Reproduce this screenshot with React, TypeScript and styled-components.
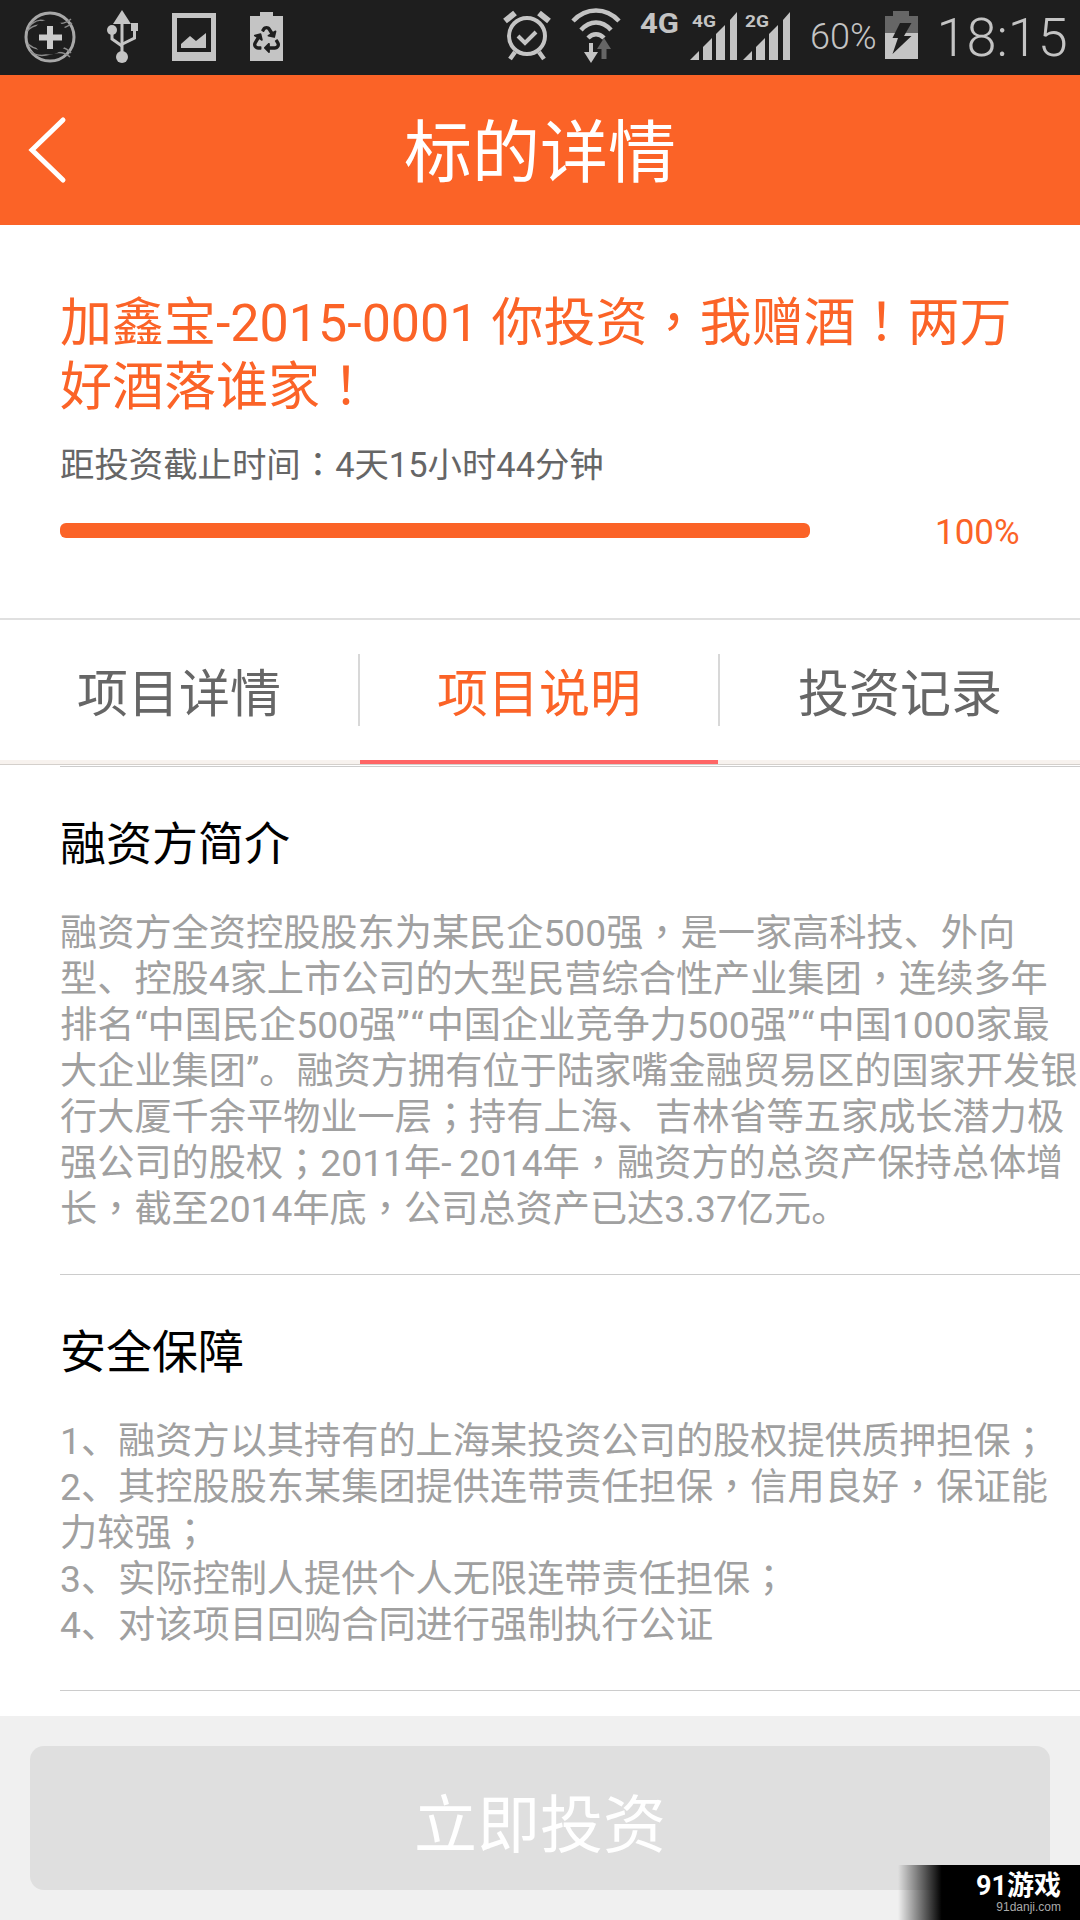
import React from "react";
import styled, { createGlobalStyle } from "styled-components";
import { FaRecycle } from "react-icons/fa";

const ORANGE = "#fb6327";
const ICON = "#c4c4c4";
const BAR = "#1e1e1e";

const GlobalStyle = createGlobalStyle`
  html, body {
    margin: 0;
    padding: 0;
    background: #fff;
  }
  body {
    font-family: Roboto, "Noto Sans CJK SC", sans-serif;
  }
`;

const Page = styled.div`
  position: relative;
  width: 1080px;
  height: 1920px;
  overflow: hidden;
  display: flex;
  flex-direction: column;
  background: #fff;
`;

const StatusBar = styled.div`
  height: 75px;
  flex: none;
  display: flex;
  background: ${BAR};
  color: ${ICON};
`;

const StatusIcon = styled.svg<{ $left: number }>`
  display: block;
  flex: none;
  height: 75px;
  margin-left: ${(p) => p.$left}px;
`;

const StatusText = styled.span<{ $left: number; $size: number }>`
  flex: none;
  margin-left: ${(p) => p.$left}px;
  font-size: ${(p) => p.$size}px;
  font-weight: 300;
  line-height: 75px;
  white-space: nowrap;
`;

const Header = styled.header`
  position: relative;
  height: 150px;
  flex: none;
  box-sizing: border-box;
  padding-top: 7px;
  display: flex;
  align-items: center;
  justify-content: center;
  background: ${ORANGE};
`;

const BackIcon = styled.svg`
  position: absolute;
  left: 28px;
  top: 41px;
`;

const HeaderTitle = styled.h1`
  margin: 0;
  font-size: 68px;
  font-weight: 400;
  line-height: 100px;
  color: #fff;
`;

const Summary = styled.section`
  height: 395px;
  flex: none;
  box-sizing: border-box;
  padding: 67px 0 0 60px;
  border-bottom: 2px solid #e0e0e0;
`;

const ProjectTitle = styled.h2`
  margin: 0;
  font-size: 52px;
  font-weight: 400;
  line-height: 64px;
  color: ${ORANGE};
  white-space: nowrap;
`;

const Deadline = styled.p`
  margin: 22px 0 0;
  font-size: 34.4px;
  line-height: 46px;
  color: #666;
  white-space: nowrap;
`;

const ProgressRow = styled.div`
  margin-top: 22px;
  height: 40px;
  display: flex;
  align-items: center;
`;

const ProgressBar = styled.div`
  width: 750px;
  height: 15px;
  border-radius: 6px;
  background: ${ORANGE};
`;

const ProgressValue = styled.span`
  margin: 4px 0 0 125px;
  font-size: 35px;
  color: ${ORANGE};
`;

const TabRow = styled.nav`
  height: 144px;
  flex: none;
  box-sizing: border-box;
  display: flex;
  margin-bottom: 2px;
  border-bottom: 4px solid #f7f2ee;
  box-shadow: 0 1px 0 #d4d0cc;
`;

const Tab = styled.div<{ $active?: boolean; $width: number }>`
  width: ${(p) => p.$width}px;
  flex: none;
  display: flex;
  align-items: center;
  justify-content: center;
  font-size: 51px;
  color: ${(p) => (p.$active ? ORANGE : "#666")};
  ${(p) => p.$active && "height: 144px; box-sizing: border-box; border-bottom: 4px solid #f66;"}
`;

const TabDivider = styled.div`
  width: 2px;
  height: 72px;
  flex: none;
  align-self: center;
  background: #d8d8d8;
`;

const Section = styled.section`
  margin-left: 60px;
  padding: 47px 0 42px;
  border-top: 1px solid #ccc;
`;

const SectionTitle = styled.h3`
  margin: 0;
  font-size: 46px;
  font-weight: 400;
  line-height: 60px;
  color: #000;
`;

const SectionBody = styled.div`
  margin-top: 36px;
  font-size: 37.2px;
  line-height: 46px;
  color: #a0a0a0;
  white-space: nowrap;
`;

const EndRule = styled.div`
  margin-left: 60px;
  height: 1px;
  flex: none;
  background: #ccc;
`;

const Footer = styled.footer`
  flex: 1;
  margin-top: 25px;
  padding: 30px 30px 0;
  background: #f0f0f0;
`;

const InvestButton = styled.div`
  height: 144px;
  box-sizing: border-box;
  padding-top: 3px;
  border-radius: 14px;
  display: flex;
  align-items: center;
  justify-content: center;
  background: #dfdfdf;
  font-size: 63px;
  color: #fff;
`;

const Mid = styled.span`
  font-family: Roboto, "Noto Sans CJK TC", sans-serif;
`;

const QuotePair = styled.span`
  letter-spacing: 3px;
`;

const Watermark = styled.div`
  position: absolute;
  right: 0;
  bottom: 0;
  width: 182px;
  height: 55px;
  box-sizing: border-box;
  padding: 7px 19px 0 0;
  display: flex;
  flex-direction: column;
  align-items: flex-end;
  background: linear-gradient(to right, rgba(0, 0, 0, 0), #000 24%);
  color: #fff;
`;

const WatermarkLogo = styled.span`
  font-size: 27px;
  font-weight: 700;
  line-height: 28px;
`;

const WatermarkUrl = styled.span`
  font-family: "Liberation Sans", sans-serif;
  font-size: 12px;
  line-height: 14px;
  color: #aaa;
`;

// centred full-width punctuation, as the phone's fallback font draws it
function punct(text: string) {
  return text.split(/([，！；：]|”“)/).map((part, i) => {
    if (i % 2 === 0) return part;
    return part === "”“" ? <QuotePair key={i}>{part}</QuotePair> : <Mid key={i}>{part}</Mid>;
  });
}

const introLines = [
  "融资方全资控股股东为某民企500强，是一家高科技、外向",
  "型、控股4家上市公司的大型民营综合性产业集团，连续多年",
  "排名“中国民企500强”“中国企业竞争力500强”“中国1000家最",
  "大企业集团”。融资方拥有位于陆家嘴金融贸易区的国家开发银",
  "行大厦千余平物业一层；持有上海、吉林省等五家成长潜力极",
  "强公司的股权；2011年-\u20092014年，融资方的总资产保持总体增",
  "长，截至2014年底，公司总资产已达3.37亿元。",
];

const safetyLines = [
  "1、融资方以其持有的上海某投资公司的股权提供质押担保；",
  "2、其控股股东某集团提供连带责任担保，信用良好，保证能",
  "力较强；",
  "3、实际控制人提供个人无限连带责任担保；",
  "4、对该项目回购合同进行强制执行公证",
];

function Signal({ left, label }: { left: number; label: string }) {
  return (
    <StatusIcon $left={left} width="48" viewBox="0 0 48 75" fill={ICON}>
      <polygon points="0,60 9,51 9,60" />
      <polygon points="13,60 13,47 22,38 22,60" />
      <polygon points="26,60 26,34 35,25 35,60" />
      <polygon points="40,60 40,20 47,12 47,60" />
      <text x="2" y="27" fontFamily="Roboto, sans-serif" fontSize="16" fontWeight="700" textLength="24" lengthAdjust="spacingAndGlyphs">
        {label}
      </text>
    </StatusIcon>
  );
}

function StatusIcons() {
  return (
    <StatusBar>
      {/* add-circle notification */}
      <StatusIcon $left={24} width="52" viewBox="0 0 52 75" fill="none">
        <circle cx="26" cy="37" r="24" stroke="#a8a8a8" strokeWidth="3" />
        <path d="M5 27c7-9 14-7 21-5s14 3 21 -3M3 31c8-8 15-6 23-4s14 3 22-4" stroke="#8c8c8c" strokeWidth="1.5" />
        <path d="M4 44c8 7 15 5 22 4s14-3 21 5M6 51c7 6 14 5 20 3s14-3 20 3" stroke="#8c8c8c" strokeWidth="1.5" />
        <circle cx="26" cy="37" r="17.5" fill={BAR} />
        <path d="M26 26v23M15 37.5h23" stroke="#ccc" strokeWidth="6" />
      </StatusIcon>
      {/* usb */}
      <StatusIcon $left={30} width="32" viewBox="0 0 32 75" fill={ICON} stroke="none">
        <polygon points="16,10 7,24 25,24" />
        <rect x="14.5" y="23" width="3" height="30" />
        <circle cx="16" cy="57" r="6" />
        <circle cx="6" cy="30" r="5" />
        <rect x="25" y="23" width="7" height="8" />
        <path d="M6 33v6l10 7M28.5 30v8l-12 6" fill="none" stroke={ICON} strokeWidth="3" />
      </StatusIcon>
      {/* picture */}
      <StatusIcon $left={34} width="44" viewBox="0 0 44 75">
        <rect x="0" y="13" width="44" height="48" fill={ICON} />
        <rect x="5" y="18" width="34" height="34" fill={BAR} />
        <polygon points="9,48 9,44 18,36 24,41 34,33 34,48" fill={ICON} />
      </StatusIcon>
      {/* battery saver */}
      <StatusIcon $left={34} width="33" viewBox="0 0 33 75">
        <rect x="0" y="16" width="33" height="45" fill={ICON} />
        <rect x="10" y="12" width="13" height="6" fill={ICON} />
        <FaRecycle x="3" y="26" size="27" color={BAR} />
      </StatusIcon>
      {/* alarm */}
      <StatusIcon $left={220} width="48" viewBox="0 0 48 75" fill="none" stroke={ICON}>
        <circle cx="24" cy="36" r="18" strokeWidth="4" />
        <path d="M2 21L12 13M46 21L36 13" strokeWidth="6" />
        <path d="M12 52l-5 7M36 52l5 7" strokeWidth="4.5" />
        <path d="M15 36l7 7 11-11" strokeWidth="4" />
      </StatusIcon>
      {/* wifi with data arrows */}
      <StatusIcon $left={20} width="50" viewBox="0 0 50 75" fill="none" stroke={ICON} strokeWidth="4.5">
        <path d="M2 21C15 7 35 7 48 21" />
        <path d="M10 30C19 20 31 20 40 30" />
        <path d="M17 38C22 33 28 33 33 38" />
        <polygon points="33,38 26,49 40,49" fill="#666" stroke="none" />
        <rect x="30.5" y="48" width="5" height="11" fill="#666" stroke="none" />
        <rect x="18" y="43" width="4" height="11" fill={ICON} stroke="none" />
        <polygon points="20,63 13,52 27,52" fill={ICON} stroke="none" />
      </StatusIcon>
      {/* network type */}
      <StatusIcon $left={19} width="40" viewBox="0 0 40 75" fill={ICON}>
        <text x="0" y="33" fontFamily="Roboto, sans-serif" fontSize="28" fontWeight="700" textLength="39" lengthAdjust="spacingAndGlyphs">
          4G
        </text>
      </StatusIcon>
      <Signal left={10} label="4G" />
      <Signal left={5} label="2G" />
      <StatusText $left={19} $size={36}>60%</StatusText>
      {/* charging battery */}
      <StatusIcon $left={8} width="33" viewBox="0 0 33 75">
        <rect x="8" y="11" width="16" height="6" fill="#666" />
        <rect x="0" y="16" width="33" height="17" fill="#666" />
        <rect x="0" y="33" width="33" height="26" fill={ICON} />
        <polygon points="15,23 26.500,23 19,36 26.500,36 7.500,54 13,38 7.500,38" fill={BAR} />
      </StatusIcon>
      <StatusText $left={19} $size={54}>18:15</StatusText>
    </StatusBar>
  );
}

export default function App() {
  return (
    <Page>
      <GlobalStyle />
      <StatusIcons />
      <Header>
        <BackIcon width="44" height="68" viewBox="0 0 44 68" fill="none" stroke="#fff" strokeWidth="5" strokeLinecap="round">
          <path d="M35 4L4 34l31 30" />
        </BackIcon>
        <HeaderTitle>标的详情</HeaderTitle>
      </Header>
      <Summary>
        <ProjectTitle>
          {punct("加鑫宝-2015-0001 你投资，我赠酒！两万")}
          <br />
          {punct("好酒落谁家！")}
        </ProjectTitle>
        <Deadline>{punct("距投资截止时间：4天15小时44分钟")}</Deadline>
        <ProgressRow>
          <ProgressBar />
          <ProgressValue>100%</ProgressValue>
        </ProgressRow>
      </Summary>
      <TabRow>
        <Tab $width={358}>项目详情</Tab>
        <TabDivider />
        <Tab $width={358} $active>项目说明</Tab>
        <TabDivider />
        <Tab $width={360}>投资记录</Tab>
      </TabRow>
      <Section>
        <SectionTitle>融资方简介</SectionTitle>
        <SectionBody>
          {introLines.map((line) => (
            <div key={line}>{punct(line)}</div>
          ))}
        </SectionBody>
      </Section>
      <Section>
        <SectionTitle>安全保障</SectionTitle>
        <SectionBody>
          {safetyLines.map((line) => (
            <div key={line}>{punct(line)}</div>
          ))}
        </SectionBody>
      </Section>
      <EndRule />
      <Footer>
        <InvestButton>立即投资</InvestButton>
      </Footer>
      <Watermark>
        <WatermarkLogo>91游戏</WatermarkLogo>
        <WatermarkUrl>91danji.com</WatermarkUrl>
      </Watermark>
    </Page>
  );
}
